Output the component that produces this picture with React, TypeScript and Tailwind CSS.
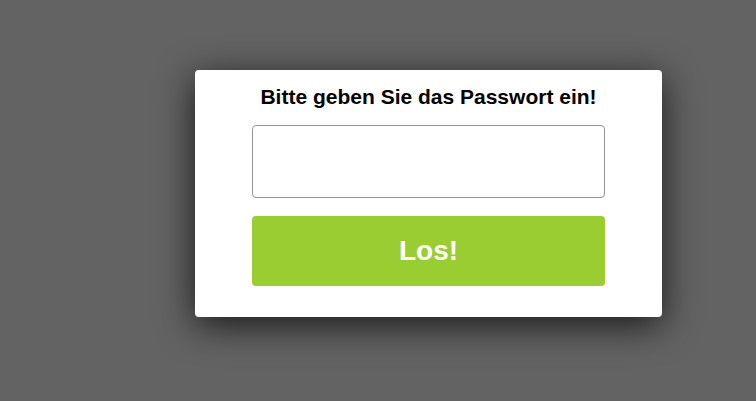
import { useState } from "react";

export default function App() {
  const [password, setPassword] = useState("");

  return (
    <div
      className="min-h-[401px] w-full bg-[#636363] pl-[195px] pt-[70px]"
      style={{ fontFamily: '"Liberation Sans", Arial, sans-serif' }}
    >
      {/* Passwort-Dialog */}
      <div className="flex h-[247px] w-[467px] flex-col items-center rounded-[4px] bg-white pt-[14px] shadow-[0_8px_36px_rgba(0,0,0,0.75)]">
        <h1 className="text-[21px] font-bold leading-[25px] text-black">
          Bitte geben Sie das Passwort ein!
        </h1>
        <input
          type="password"
          value={password}
          onChange={(e) => setPassword(e.target.value)}
          className="mt-[16px] h-[73px] w-[353px] rounded-[4px] border-[1.5px] border-[#949494] bg-white px-3 outline-none"
        />
        <button
          type="button"
          className="mt-[18px] h-[70px] w-[353px] rounded-[4px] bg-[#9acd32] text-[28px] font-bold text-white"
        >
          Los!
        </button>
      </div>
    </div>
  );
}
